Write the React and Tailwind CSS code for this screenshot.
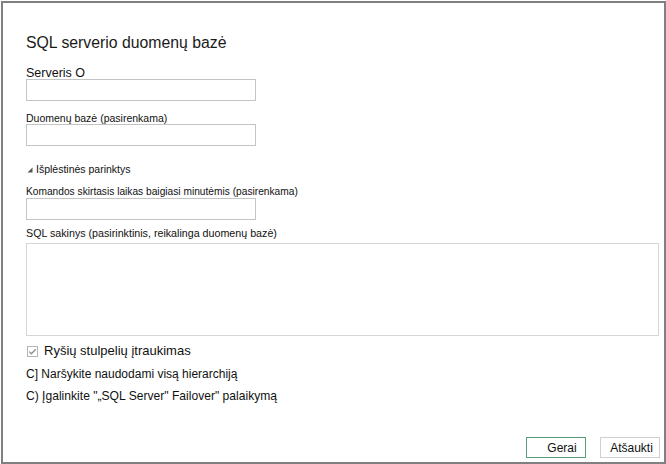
import React from "react";

const font = { fontFamily: '"Liberation Sans", Arial, sans-serif' };

function Input() {
  return <div className="w-[230px] h-[22px] border border-[#c4c4c4] bg-white" />;
}

export default function App() {
  return (
    <div className="w-[666px] h-[464px] bg-white pt-px pl-px text-[#111]" style={font}>
      <div className="w-[665px] h-[463px] border-2 border-[#808080] flex flex-col pl-[23px]">
        <div className="mt-[30px] text-[15.8px] leading-[20px] text-[#1a1a1a]">SQL serverio duomenų bazė</div>
        <div className="mt-[14px] text-[12.5px] leading-[12px]">Serveris O</div>
        <Input />
        <div className="mt-[11px] text-[10.5px] leading-[12px]">Duomenų bazė (pasirenkama)</div>
        <Input />
        <div className="mt-[17px] flex items-center gap-[3px] text-[10.5px] leading-[12px]">
          <svg width="6" height="6" viewBox="0 0 6 6" className="ml-px mt-[1px]">
            <polygon points="5.5,0.5 5.5,5.5 0.5,5.5" fill="#555" />
          </svg>
          <span>Išplėstinės parinktys</span>
        </div>
        <div className="mt-[11px] text-[10.2px] leading-[12px]">Komandos skirtasis laikas baigiasi minutėmis (pasirenkama)</div>
        <Input />
        <div className="mt-[7px] text-[10.7px] leading-[12px]">SQL sakinys (pasirinktinis, reikalinga duomenų bazė)</div>
        <div className="mt-[4px] w-[633px] h-[93px] border border-[#d6d6d6] bg-white" />
        <div className="mt-[7px] flex items-center gap-[6px] text-[13px] leading-[16px]">
          <svg width="11" height="11" viewBox="0 0 11 11" className="ml-px">
            <rect x="0.5" y="0.5" width="10" height="10" fill="#fff" stroke="#b5b5b5" />
            <path d="M2.3 5.6 L4.4 7.7 L8.7 3.2" fill="none" stroke="#8c8c8c" strokeWidth="1.3" />
          </svg>
          <span>Ryšių stulpelių įtraukimas</span>
        </div>
        <div className="mt-[8px] text-[12px] leading-[14px]">C] Naršykite naudodami visą hierarchiją</div>
        <div className="mt-[8px] text-[12.1px] leading-[14px]">C) Įgalinkite "„SQL Server" Failover" palaikymą</div>
        <div className="mt-auto mb-[4px] mr-[4px] flex justify-end gap-[14px] text-[12px]">
          <div className="w-[60px] h-[21px] border border-[#5a9b77] flex items-center justify-center pl-[12px]">Gerai</div>
          <div className="w-[60px] h-[21px] border border-[#d0d0d0] flex items-center justify-center pl-[3px]">Atšaukti</div>
        </div>
      </div>
    </div>
  );
}
